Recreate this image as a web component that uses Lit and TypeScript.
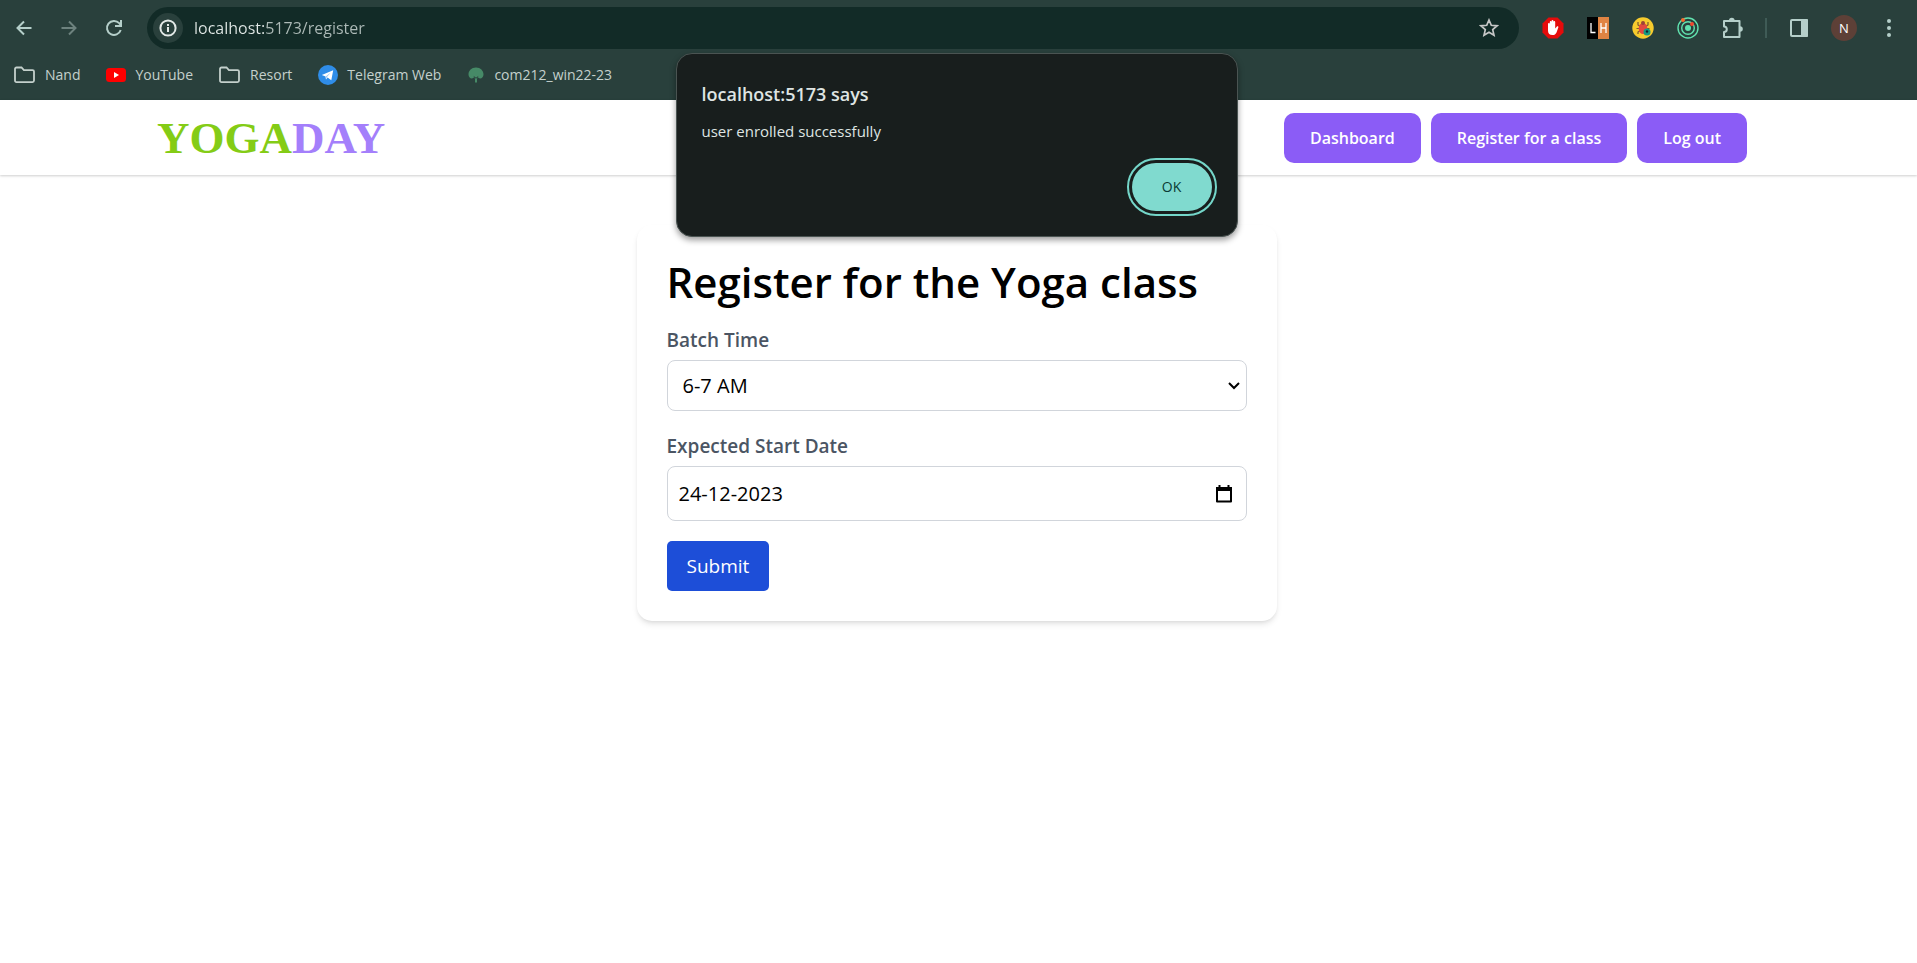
import { LitElement, html, css } from "lit";
import { customElement } from "lit/decorators.js";

const folder = html`<svg class="folder" width="22" height="18" viewBox="0 0 22 18" aria-hidden="true">
  <path d="M1 14.500V3a1.500 1.500 0 0 1 1.500-1.500h5l2.400 2.600H18.500a1.500 1.500 0 0 1 1.500 1.500v9a1.500 1.500 0 0 1-1.500 1.500H2.500a1.500 1.500 0 0 1-1.500-1.600z" fill="none" stroke="currentColor" stroke-width="1.800"/>
</svg>`;

const youtube = html`<svg width="20" height="20" viewBox="0 0 20 20" aria-hidden="true">
  <rect x="0" y="3" width="20" height="14" rx="3.500" fill="#f00"/><path d="M8 7l5 3-5 3z" fill="#fff"/>
</svg>`;

const telegram = html`<svg width="20" height="20" viewBox="0 0 20 20" aria-hidden="true">
  <circle cx="10" cy="10" r="10" fill="#2f8de8"/>
  <path d="M3.800 10L15.200 5.300 13.300 15.300 9.600 12.600 8 14.400 7.500 11.600z" fill="#fff"/>
  <path d="M7.700 11.500L12.800 7.600 8.800 12.200 8 14.200z" fill="#9cc8f5"/>
</svg>`;

const tree = html`<svg width="18" height="16" viewBox="-1 0 18 16" aria-hidden="true">
  <path d="M8 .5C3.500.5.500 3.800.500 7.400c0 2.200 1.500 4 3.300 4 1.200 0 2-.8 2.400-1.700L7 12v3.500h2V12l.8-2.300c.4.900 1.200 1.700 2.400 1.700 1.800 0 3.300-1.800 3.300-4C15.500 3.800 12.500.5 8 .5z" fill="#468a67"/>
  <path d="M5.800 9.600L8 11.200l2.200-1.600" fill="none" stroke="#29403c" stroke-width="1"/>
</svg>`;

@customElement("app-root")
export class AppRoot extends LitElement {
  static styles = css`
    :host {
      --edge: 4px;
      display: block;
      position: relative;
      min-height: 100vh;
      background: #fff;
      color: #000;
      font-family: "Open Sans", "Noto Sans", sans-serif;
      font-size: 20px;
      line-height: 30px;
    }
    *, *::before, *::after { box-sizing: border-box; }
    button, input, select { font: inherit; margin: 0; }
    button { border: 0; cursor: pointer; }
    a { color: inherit; text-decoration: none; }
    svg { display: block; flex: none; }

    .chrome { background: #29403c; color: #c4d0cc; font-size: 14px; line-height: 20px; height: 100px; }
    .toolbar { display: flex; align-items: center; padding: 7px 14px 0 10px; }
    .tool { display: grid; place-items: center; width: 28px; height: 28px; padding: 0; background: none; color: #b5cfca; }
    .steer { display: flex; gap: 17px; margin-right: 19px; }
    .dim { color: #6d827e; }
    .omnibox {
      flex: 1; display: flex; align-items: center; height: 42px; padding: 0 16px 0 6px;
      border-radius: 21px; background: #122b27; margin-right: 20px;
    }
    .info { display: grid; place-items: center; width: 30px; height: 30px; padding: 0; border-radius: 50%; background: #29403c; color: #e2e9e7; }
    .url {
      flex: 1; min-width: 0; border: 0; outline: 0; padding: 0 0 0 11px; font-size: 16px; line-height: 24px;
      color: transparent; caret-color: #e2e9e7;
      background: linear-gradient(90deg, #e2e9e7 84px, #aebbb8 84px);
      -webkit-background-clip: text; background-clip: text;
    }
    .star { color: #c7c7c7; }
    .tools { display: flex; align-items: center; gap: 17px; }
    .rule { width: 2px; height: 20px; background: #3f5b56; margin: 0 1px; }
    .avatar { display: grid; place-items: center; border-radius: 50%; background: #5d4037; color: #fff; width: 26px; height: 26px; font-size: 13px; }
    .bookmarks { display: flex; gap: 26px; padding: 14px 14px 0; }
    .bookmark { display: flex; align-items: center; gap: 9px; height: 24px; }

    .header { box-shadow: 0 1px 3px rgba(0, 0, 0, 0.1), 0 1px 2px rgba(0, 0, 0, 0.1); }
    .bar { display: flex; align-items: center; justify-content: space-between; height: 75px; margin: 0 170px 0 157px; }
    .logo { font: bold 45px/50px "Liberation Serif", serif; color: #84cc16; }
    .day { color: #a47ffb; }
    .nav { display: flex; gap: 10px; }
    .navlink { padding: 10px 26px; border-radius: 10px; background: #8b5cf6; color: #fff; font-size: 16px; font-weight: 600; }

    .main { padding: 50px calc(20px + var(--edge)) 50px 20px; }
    .card {
      max-width: 640px; margin: 0 auto; padding: 30px; border-radius: 15px; background: #fff;
      box-shadow: 0 4px 6px -1px rgba(0, 0, 0, 0.1), 0 2px 4px -2px rgba(0, 0, 0, 0.1);
    }
    .title { margin: 0 0 16px; font-size: 42px; line-height: 54px; font-weight: 600; }
    .label { display: block; margin-bottom: 5px; color: #4b5563; font-weight: 600; font-size: 19px; }
    .field {
      display: grid; align-items: center; margin-bottom: 20px;
      border: 1px solid #d1d5db; border-radius: 8px; background: #fff;
    }
    .control {
      grid-area: 1 / 1; width: 100%; min-width: 0; border: 0; border-radius: 8px;
      background: none; color: #000; appearance: none;
    }
    .batch { height: 49px; padding: 0 40px 0 15px; }
    .date { height: 53px; padding: 0 50px 0 11px; }
    .chevron { grid-area: 1 / 1; justify-self: end; margin-right: 6px; pointer-events: none; }
    .calendar { grid-area: 1 / 1; justify-self: end; margin-right: 8px; color: #000; }
    .submit { height: 50px; padding: 10px 20px; border-radius: 5px; background: #1d4ed8; color: #fff; font-size: 19px; display: block; }

    .alert {
      position: absolute; top: 53px; left: 0; right: var(--edge);
      width: 562px; margin: 0 auto; padding: 26px 25px 25px; border: 1px solid #4a5452; border-radius: 16px;
      background: #181e1d; color: #dfe5e3; box-shadow: 0 3px 6px rgba(0, 0, 0, 0.4);
      display: flex; flex-direction: column;
    }
    .says { margin: 0 0 11px; font-size: 18px; line-height: 28px; font-weight: 600; }
    .message { margin: 0 0 20px; font-size: 15px; line-height: 24px; }
    .ok {
      align-self: flex-end; width: 80px; height: 48px; border-radius: 24px; background: #80dacf; color: #0b3a34;
      font-size: 14px; font-weight: 500; outline: 2px solid #74d6c9; outline-offset: 3px;
    }
  `;

  render() {
    return html`
      <div class="chrome">
        <div class="toolbar">
          <div class="steer">
            <button class="tool" aria-label="Back"><svg width="16" height="16" viewBox="0 0 16 16"><path d="M15.500 8H2M8 1.500L1.500 8 8 14.500" fill="none" stroke="currentColor" stroke-width="2"/></svg></button>
            <button class="tool dim" aria-label="Forward"><svg width="16" height="16" viewBox="0 0 16 16"><path d="M.5 8H14M8 1.500L14.500 8 8 14.500" fill="none" stroke="currentColor" stroke-width="2"/></svg></button>
            <button class="tool" aria-label="Reload"><svg width="18" height="18" viewBox="0 0 18 18"><path d="M15.700 11A7 7 0 1 1 14.200 4.200L16 6.500M16 1V7H10" fill="none" stroke="currentColor" stroke-width="2"/></svg></button>
          </div>
          <div class="omnibox">
            <button class="info" aria-label="Site information"><svg width="18" height="18" viewBox="0 0 18 18"><circle cx="9" cy="9" r="7.600" fill="none" stroke="currentColor" stroke-width="2"/><path d="M9 8v5M9 5v2" stroke="currentColor" stroke-width="2"/></svg></button>
            <input class="url" type="text" aria-label="Address" .value=${"localhost:5173/register"} />
            <button class="tool star" aria-label="Bookmark"><svg width="20" height="20" viewBox="0 0 20 20"><path d="M10 2l2.300 5.300 5.700.5-4.300 3.800 1.300 5.700L10 14.300 5 17.300l1.300-5.700L2 7.800l5.700-.5z" fill="none" stroke="currentColor" stroke-width="1.700"/></svg></button>
          </div>
          <div class="tools">
            <button class="tool" aria-label="Blocker"><svg width="22" height="22" viewBox="0 0 22 22"><path d="M6.500.5h9l6 6v9l-6 6h-9l-6-6v-9z" fill="#e50b0b"/><path d="M6 12V7a.900.900 0 0 1 1.800 0V5a.900.900 0 0 1 1.800 0V4a.900.900 0 0 1 1.800 0V5a.900.900 0 0 1 1.800 0V11.500l1.500-1.800c.8-.9 2-.2 1.600.8L14.500 15.500c-.7 1.700-2 2.600-4.100 2.600C7.600 18.100 6 16.500 6 13.800z" fill="#fff"/></svg></button>
            <button class="tool" aria-label="LH"><svg width="22" height="22" viewBox="0 0 22 22"><path d="M0 0h11v22H0z" fill="#000"/><path d="M11 0h11v22H11z" fill="#e08443"/><path d="M4 6v9.500h4.500M14 6v10M19 6v10M14 11h5" fill="none" stroke="#fff" stroke-width="1.300"/></svg></button>
            <button class="tool" aria-label="Bug tracker"><svg width="22" height="22" viewBox="0 0 22 22"><circle cx="11" cy="11" r="10.700" fill="#f7cb2d"/><path d="M6 5v3l3 2M16 5v3l-3 2M4.500 11.500h13M6 17v-2l3-2M16 17v-2l-3-2" fill="none" stroke="#7a5a2e" stroke-width="1.200"/><ellipse cx="11" cy="11.500" rx="4.300" ry="5.500" fill="#e2493f"/><circle cx="11" cy="6" r="2" fill="#9a4436"/><circle cx="15" cy="15" r="3.500" fill="#159a80"/><circle cx="15" cy="14.500" r="1.200" fill="#123"/></svg></button>
            <button class="tool" aria-label="Orbit"><svg width="22" height="22" viewBox="0 0 22 22"><circle cx="11" cy="11" r="10" fill="none" stroke="#61e2af" stroke-width="1.400"/><circle cx="11" cy="11" r="6.300" fill="none" stroke="#61e2af" stroke-width="1.400"/><circle cx="11" cy="11" r="3" fill="#61e2af"/><circle cx="6" cy="3" r="2" fill="#f26b2e"/><circle cx="15" cy="7" r="2" fill="#f2472e"/></svg></button>
            <button class="tool" aria-label="Extensions"><svg width="22" height="22" viewBox="0 0 22 22"><path d="M2 4H17.500V20H2V15a2.800 2.800 0 0 0 0-5.600z" fill="none" stroke="currentColor" stroke-width="2" stroke-linejoin="round"/><path d="M7 3.500a2.800 2.800 0 0 1 5.600 0zM18 9.200a2.800 2.800 0 0 1 0 5.600z" fill="currentColor"/></svg></button>
            <span class="rule"></span>
            <button class="tool" aria-label="Side panel"><svg width="18" height="18" viewBox="0 0 18 18"><rect x="1" y="1" width="16" height="16" rx="1" fill="none" stroke="currentColor" stroke-width="2"/><path d="M11 0h6a1 1 0 0 1 1 1v16a1 1 0 0 1-1 1h-6z" fill="currentColor"/></svg></button>
            <button class="tool" aria-label="Profile"><span class="avatar">N</span></button>
            <button class="tool" aria-label="Menu"><svg width="4" height="18" viewBox="0 0 4 18" fill="currentColor"><circle cx="2" cy="2" r="2"/><circle cx="2" cy="9" r="2"/><circle cx="2" cy="16" r="2"/></svg></button>
          </div>
        </div>
        <nav class="bookmarks" aria-label="Bookmarks">
          <a class="bookmark" href="#">${folder}Nand</a>
          <a class="bookmark" href="#">${youtube}YouTube</a>
          <a class="bookmark" href="#">${folder}Resort</a>
          <a class="bookmark" href="#">${telegram}Telegram Web</a>
          <a class="bookmark" href="#">${tree}com212_win22-23</a>
        </nav>
      </div>

      <header class="header">
        <div class="bar">
          <a class="logo" href="#">YOGA<span class="day">DAY</span></a>
          <nav class="nav" aria-label="Site">
            <a class="navlink" href="#">Dashboard</a>
            <a class="navlink" href="#">Register for a class</a>
            <a class="navlink" href="#">Log out</a>
          </nav>
        </div>
      </header>

      <main class="main">
        <form class="card" @submit=${(e: Event) => e.preventDefault()}>
          <h1 class="title">Register for the Yoga class</h1>
          <label class="label" for="batch">Batch Time</label>
          <div class="field">
            <select class="control batch" id="batch"><option>6-7 AM</option></select>
            <svg class="chevron" width="12" height="8" viewBox="0 0 12 8" aria-hidden="true"><path d="M1 1l5 5 5-5" fill="none" stroke="#000" stroke-width="2"/></svg>
          </div>
          <label class="label" for="start">Expected Start Date</label>
          <div class="field">
            <input class="control date" id="start" type="text" inputmode="numeric" .value=${"24-12-2023"} />
            <button class="tool calendar" type="button" aria-label="Show date picker"><svg width="18" height="20" viewBox="0 0 18 20"><path d="M2 4h14v13.500H2z" fill="none" stroke="currentColor" stroke-width="2" stroke-linejoin="round"/><path d="M1 3h16v4H1zM3.500 1h2v3h-2zM12.500 1h2v3h-2z" fill="currentColor"/></svg></button>
          </div>
          <button class="submit" type="submit">Submit</button>
        </form>
      </main>

      <section class="alert" role="alertdialog" aria-labelledby="says" aria-describedby="message">
        <h2 class="says" id="says">localhost:5173 says</h2>
        <p class="message" id="message">user enrolled successfully</p>
        <button class="ok">OK</button>
      </section>
    `;
  }
}
